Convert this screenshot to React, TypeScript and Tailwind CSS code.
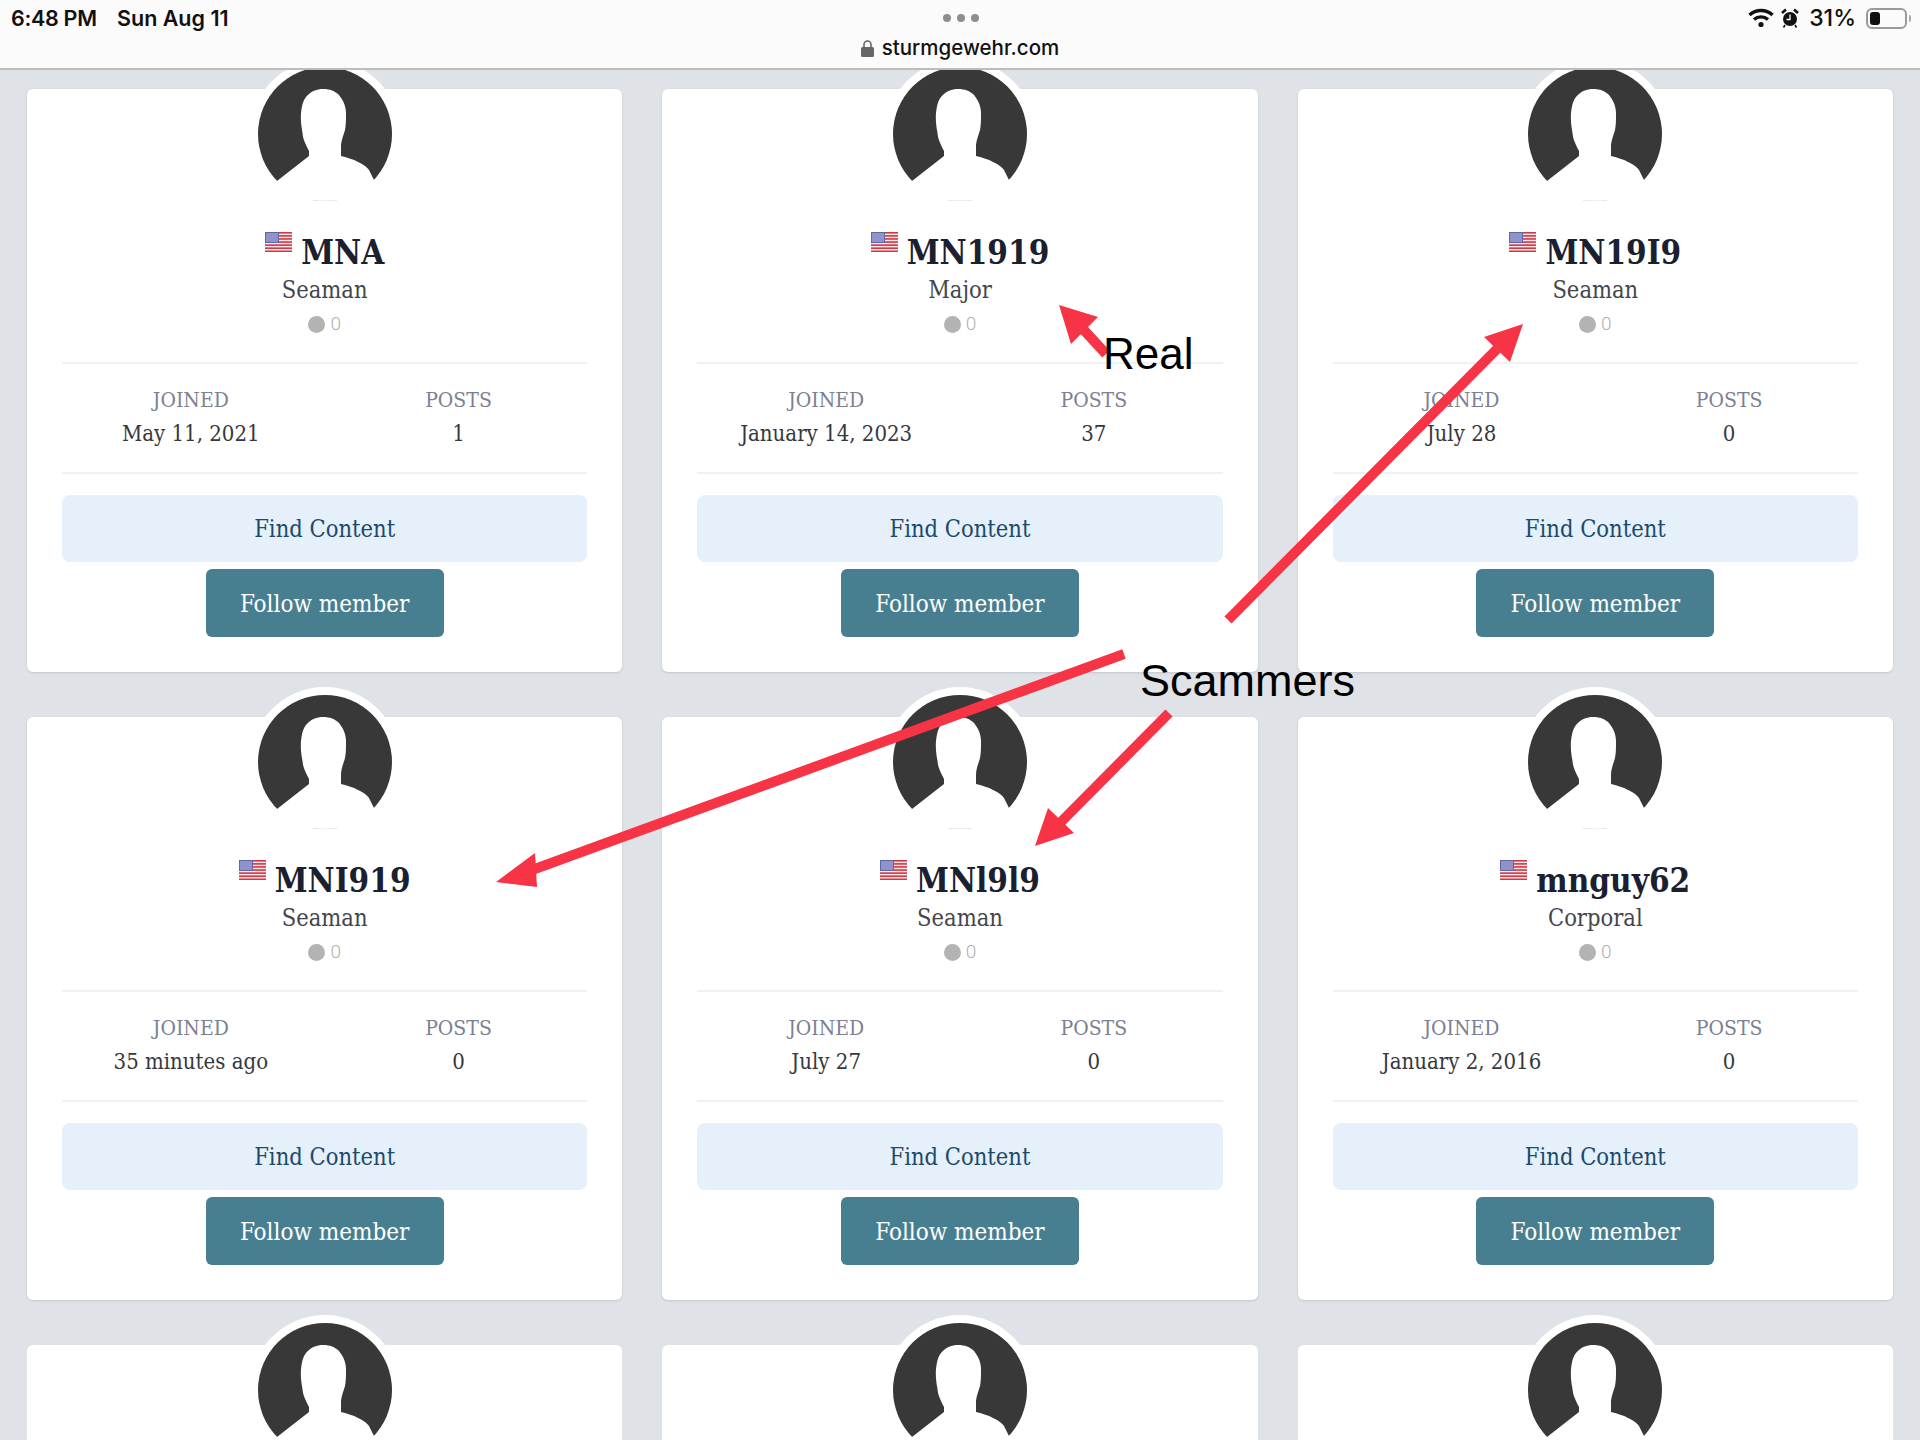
// App.tsx
const slab = "font-['DejaVu_Serif_Condensed','DejaVu_Serif',serif]";

const members = [
  { name: "MNA", rank: "Seaman", joined: "May 11, 2021", posts: "1" },
  { name: "MN1919", rank: "Major", joined: "January 14, 2023", posts: "37" },
  { name: "MN19I9", rank: "Seaman", joined: "July 28", posts: "0" },
  { name: "MNI919", rank: "Seaman", joined: "35 minutes ago", posts: "0" },
  { name: "MNl9l9", rank: "Seaman", joined: "July 27", posts: "0" },
  { name: "mnguy62", rank: "Corporal", joined: "January 2, 2016", posts: "0" },
];

function Avatar() {
  return (
    <div className="-mt-[30px] mx-auto flex h-[150px] w-[150px] items-center justify-center rounded-full bg-white">
      <svg width="134" height="134" viewBox="0 0 134 134">
        <circle cx="67" cy="67" r="67" fill="#383838" />
        <path
          d="M19 114 L51 89 L51 84 C47 76 45 72 44.5 66 C43 58 42.5 52 43 46 C44 38 45 34 48 30 C53 24 59 22 65 22 C72 22 77 24 81 28 C85 33 88 39 88 46 C88 54 88 58 87 63 C85 70 83 74 83 80 L83 89 C90 91 95 92 100 95 C106 98 109 100 111 103 L116 113 L134 134 L0 134 Z"
          fill="#fff"
        />
        <path d="M55 133.6 Q67 134.4 79 133.6" fill="none" stroke="#e4e4e4" strokeWidth="1" />
      </svg>
    </div>
  );
}

function Flag() {
  const stripes = [0, 1, 2, 3, 4, 5, 6];
  return (
    <svg width="27" height="20" viewBox="0 0 27 20" className="mt-px shrink-0">
      <rect width="27" height="20" fill="#f6e6e6" />
      {stripes.map((i) => (
        <rect key={i} y={i * 3.08} width="27" height="1.6" fill="#cf3a48" />
      ))}
      <rect width="14" height="11" fill="#5f66ac" />
      <rect x="1" y="1" width="12" height="9" fill="#a3a7d4" opacity="0.7" />
    </svg>
  );
}

function MemberCard({ name, rank, joined, posts }: (typeof members)[number]) {
  return (
    <div className={`flex flex-col rounded-md bg-white px-[35px] pb-[35px] shadow-sm ${slab}`}>
      <Avatar />
      <div className="mt-[22px] flex h-[46px] items-start justify-center gap-[9px]">
        <Flag />
        <span className="text-[33px] leading-[43px] font-bold text-[#1b2030]">{name}</span>
      </div>
      <div className="h-[26px] text-center text-[23.5px] leading-[26px] text-[#44464c]">{rank}</div>
      <div className="mt-[10px] flex h-[22px] items-center justify-center gap-[5px]">
        <span className="h-[17px] w-[17px] rounded-full bg-[#b3b3b3]" />
        <span className="font-['Roboto',sans-serif] text-[19px] font-light text-[#b0b0b0]">0</span>
      </div>
      <div className="mt-[27px] border-y-2 border-[#f0f1f2] pt-[23px] pb-[25px]">
        <div className="-mx-[5px] grid grid-cols-2 text-center">
          <div>
            <div className="text-[21px] leading-[26px] text-[#7b8092]">JOINED</div>
            <div className="mt-[8px] text-[22px] leading-[26px] text-[#36383d]">{joined}</div>
          </div>
          <div>
            <div className="text-[21px] leading-[26px] text-[#7b8092]">POSTS</div>
            <div className="mt-[8px] text-[22px] leading-[26px] text-[#36383d]">{posts}</div>
          </div>
        </div>
      </div>
      <div className="mt-[21px] flex h-[67px] items-center justify-center rounded-lg bg-[#e5f0fa] pt-[3px] text-[23.5px] text-[#1c4a6e]">
        Find Content
      </div>
      <div className="mt-[7px] mx-auto flex h-[68px] w-[238px] items-center justify-center rounded-md bg-[#487f90] pt-[2px] text-[24px] text-white">
        Follow member
      </div>
    </div>
  );
}

function StatusBar() {
  return (
    <div className="relative z-10 h-[70px] border-b-2 border-[#bcbcbc] bg-[#fbfbfb] font-['Inter',sans-serif] text-[#111]">
      <div className="flex h-[36px] items-center pl-[11px] pr-[9px] text-[21.5px] font-semibold">
        <div className="flex flex-1 items-center">
          <span className="w-[106px] tracking-[-0.3px]">6:48 PM</span>
          <span>Sun Aug 11</span>
        </div>
        <div className="flex gap-[6px]">
          <span className="h-[8px] w-[8px] rounded-full bg-[#8e8e8e]" />
          <span className="h-[8px] w-[8px] rounded-full bg-[#8e8e8e]" />
          <span className="h-[8px] w-[8px] rounded-full bg-[#8e8e8e]" />
        </div>
        <div className="flex flex-1 items-center justify-end">
          <svg width="26" height="20" viewBox="0 0 26 20" fill="none" stroke="#111" strokeWidth="3.4">
            <path d="M1.5 7 C8 1 18 1 24.5 7" />
            <path d="M6 11.5 C10 8 16 8 20 11.5" />
            <circle cx="13" cy="16.5" r="2.6" fill="#111" stroke="none" />
          </svg>
          <svg width="18" height="20" viewBox="0 0 18 20" className="ml-[7px]">
            <circle cx="9" cy="11" r="7" fill="#111" />
            <path d="M9 6.5 V11.5 H5.5" fill="none" stroke="#fff" strokeWidth="1.3" />
            <path d="M1 5 L5 1.5 M13 1.5 L17 5" stroke="#111" strokeWidth="2.6" />
            <path d="M4 17 L2.5 19.5 M14 17 L15.5 19.5" stroke="#111" strokeWidth="1.6" />
          </svg>
          <span className="ml-[10px] text-[23px] font-medium">31%</span>
          <div className="ml-[10px] h-[21px] w-[41px] rounded-[6px] border-2 border-[#9a9a9a] p-[2px]">
            <div className="h-full w-[10px] rounded-[3px] bg-[#111]" />
          </div>
          <span className="ml-[2px] h-[7px] w-[2px] rounded-r bg-[#a8a8a8]" />
        </div>
      </div>
      <div className="flex h-[25px] items-center justify-center gap-[8px] text-[20.5px] font-medium">
        <svg width="13" height="17" viewBox="0 0 13 17">
          <path d="M3 7 V4.5 a3.5 3.5 0 0 1 7 0 V7" fill="none" stroke="#666" strokeWidth="1.6" />
          <rect y="7" width="13" height="10" rx="1.5" fill="#666" />
        </svg>
        <span>sturmgewehr.com</span>
      </div>
    </div>
  );
}

function Annotations() {
  return (
    <>
      <svg width="1920" height="1440" viewBox="0 0 1920 1440" className="absolute inset-0 z-20">
        <g stroke="#f73346" strokeWidth="10" fill="none">
          <path d="M1106 354 L1082 328" />
          <path d="M1228 620 L1497 349" />
          <path d="M1124 654 L532 870" />
          <path d="M1169 713 L1058 825" />
        </g>
        <g fill="#f73346">
          <polygon points="1059,305 1098,317 1071,344" />
          <polygon points="1523,324 1484,337 1510,362" />
          <polygon points="496,882 535,853 537,887" />
          <polygon points="1035,846 1048,808 1074,833" />
        </g>
      </svg>
      <span className="absolute left-[1103px] top-[329px] z-30 font-['Liberation_Sans',sans-serif] text-[44px] leading-[50px] text-black">
        Real
      </span>
      <span className="absolute left-[1140px] top-[655px] z-30 font-['Liberation_Sans',sans-serif] text-[45px] leading-[52px] text-black">
        Scammers
      </span>
    </>
  );
}

export default function App() {
  return (
    <div className="relative h-[1440px] w-[1920px] overflow-hidden bg-[#dfe2e7]">
      <StatusBar />
      <div className="grid grid-cols-3 gap-x-[40px] gap-y-[45px] px-[27px] pt-[19px]">
        {members.map((m) => (
          <MemberCard key={m.name} {...m} />
        ))}
        <div className="h-[200px] rounded-md bg-white"><Avatar /></div>
        <div className="h-[200px] rounded-md bg-white"><Avatar /></div>
        <div className="h-[200px] rounded-md bg-white"><Avatar /></div>
      </div>
      <Annotations />
    </div>
  );
}
